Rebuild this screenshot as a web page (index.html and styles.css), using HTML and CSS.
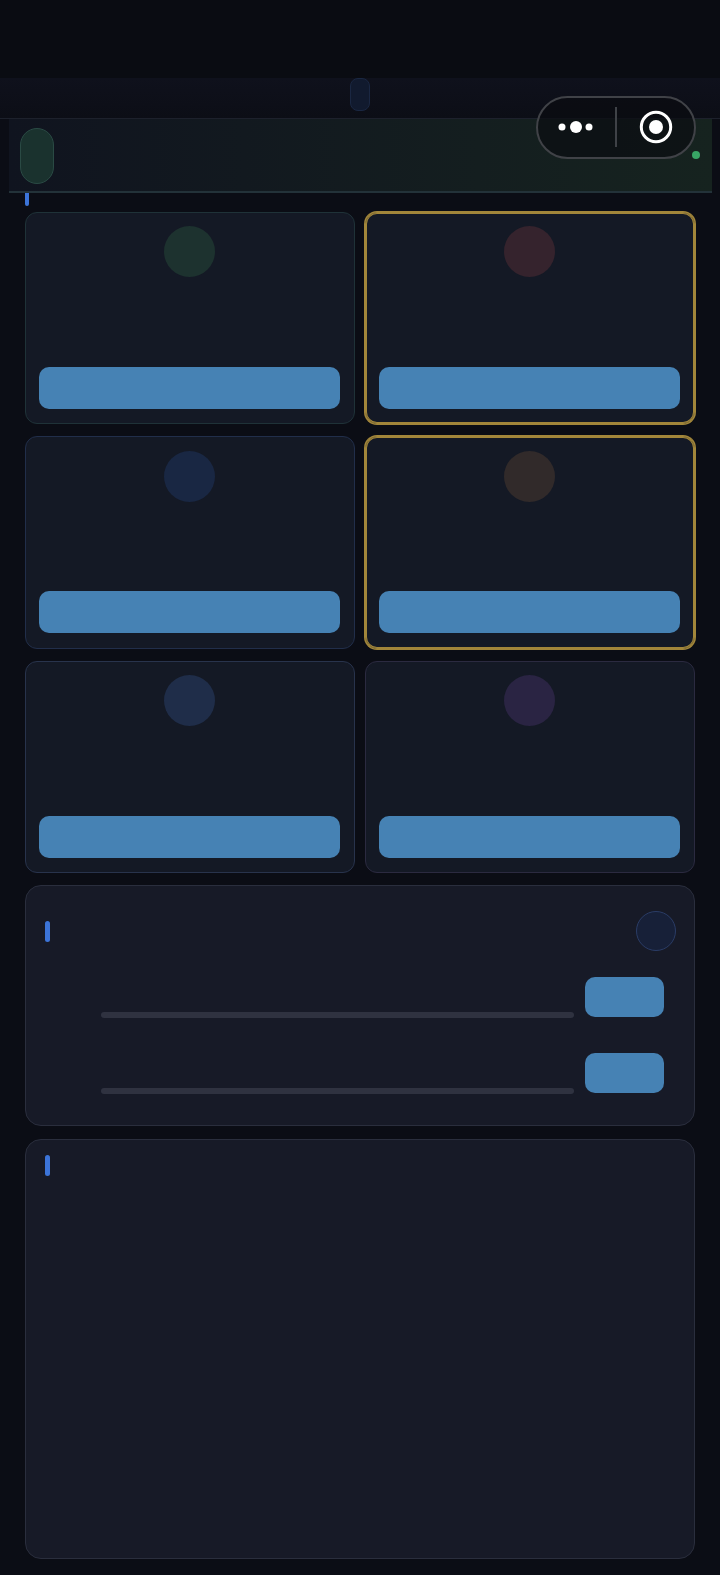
FILE: index.html
```html
<!DOCTYPE html>
<html lang="en">
<head>
<meta charset="utf-8">
<title>Dashboard</title>
<link rel="stylesheet" href="styles.css">
</head>
<body>
<div class="page">
  <div class="status-space"></div>
  <header class="topbar"><span class="top-pill"></span></header>
  <section class="banner">
    <span class="banner-pill"></span>
    <span class="online-dot"></span>
  </section>
  <main class="content">
    <span class="mark mark-section"></span>
    <div class="grid">
      <article class="card card-green"><span class="avatar avatar-green"></span><span class="btn btn-wide"></span></article>
      <article class="card card-gold"><span class="avatar avatar-red"></span><span class="btn btn-wide"></span></article>
      <article class="card card-blue"><span class="avatar avatar-blue"></span><span class="btn btn-wide"></span></article>
      <article class="card card-gold"><span class="avatar avatar-brown"></span><span class="btn btn-wide"></span></article>
      <article class="card card-slate"><span class="avatar avatar-slate"></span><span class="btn btn-wide"></span></article>
      <article class="card card-purple"><span class="avatar avatar-purple"></span><span class="btn btn-wide"></span></article>
    </div>
    <section class="panel panel-progress">
      <div class="panel-head">
        <span class="mark"></span>
        <span class="round-btn"></span>
      </div>
      <div class="rows">
        <div class="row"><span class="track"></span><span class="btn btn-small"></span></div>
        <div class="row"><span class="track"></span><span class="btn btn-small"></span></div>
      </div>
    </section>
    <section class="panel panel-empty">
      <span class="mark"></span>
    </section>
  </main>
  <div class="capsule">
    <svg class="capsule-dots" width="38" height="14" viewBox="0 0 38 14" aria-hidden="true">
      <circle cx="6" cy="7" r="3.5" fill="#fff"/>
      <circle cx="20" cy="7" r="6" fill="#fff"/>
      <circle cx="33" cy="7" r="3.5" fill="#fff"/>
    </svg>
    <span class="capsule-divider"></span>
    <svg class="capsule-ring" width="34" height="34" viewBox="0 0 34 34" aria-hidden="true">
      <circle cx="17" cy="17" r="14.7" fill="none" stroke="#fff" stroke-width="3"/>
      <circle cx="17" cy="17" r="7" fill="#fff"/>
    </svg>
  </div>
</div>
</body>
</html>
```

FILE: styles.css
```css
* { box-sizing: border-box; }
html, body { margin: 0; padding: 0; background: #0b0d15; }
.page {
  position: relative;
  width: 720px;
  height: 1575px;
  overflow: hidden;
  background: #0b0d15;
}
.status-space { height: 78px; background: #0a0c12; }
.topbar {
  height: 41px;
  display: flex;
  justify-content: center;
  background: linear-gradient(180deg, #0f111c, #0c0e16);
  border-bottom: 1px solid #1d212c;
}
.top-pill {
  width: 20px;
  height: 33px;
  border-radius: 8px;
  background: #111a2e;
  border: 1px solid #1a2742;
}
.banner {
  position: relative;
  height: 73.5px;
  margin: 0 8.5px;
  padding: 9px 11px;
  background: linear-gradient(90deg, #10141f, #16231f);
  border-bottom: 2px solid #233239;
}
.banner-pill {
  display: block;
  width: 34px;
  height: 56px;
  border-radius: 17px;
  background: #1a322e;
  border: 1px solid #2a4a44;
}
.online-dot {
  position: absolute;
  right: 11.5px;
  top: 32px;
  width: 8px;
  height: 8px;
  border-radius: 50%;
  background: #38a565;
}
.content { padding: 0 25px; }
.mark {
  display: block;
  width: 5px;
  height: 21px;
  border-radius: 3px;
  background: #3c74d8;
}
.mark-section { width: 4px; height: 13px; border-radius: 0 0 2px 2px; margin-bottom: 6.2px; }
.grid {
  display: grid;
  grid-template-columns: 330px 330.5px;
  grid-auto-rows: 212.5px;
  column-gap: 9.5px;
  row-gap: 12px;
}
.card {
  display: flex;
  flex-direction: column;
  align-items: center;
  padding: 13.5px 14px 14.5px 13px;
  border-radius: 12px;
  background: #141925;
  border: 1px solid #252c3a;
}
.card-green { border-color: #1f3238; }
.card-blue { border-color: #212e4a; }
.card-slate { border-color: #28334c; }
.card-purple { border-color: #2b2a40; }
.card-gold {
  border-color: #a2863a;
  box-shadow: 0 0 0 1px #a2863a, inset 0 0 0 1px #a2863a;
}
.avatar {
  display: block;
  width: 51px;
  height: 51px;
  border-radius: 50%;
}
.avatar-green { background: #1d322f; }
.avatar-red { background: #35232d; }
.avatar-blue { background: #192743; }
.avatar-brown { background: #312a2a; }
.avatar-slate { background: #1f2d49; }
.avatar-purple { background: #2a2443; }
.btn {
  display: block;
  background: #4682b4;
  border-radius: 10px;
}
.btn-wide { width: 100%; height: 42px; margin-top: auto; }
.btn-small { width: 79px; height: 40px; flex: none; align-self: flex-start; }
.panel {
  margin-top: 12px;
  border-radius: 16px;
  background: #171a27;
  border: 1px solid #2a2e3d;
}
.panel-progress { height: 241px; padding: 25px 18px 0 19px; }
.panel-empty { height: 420px; margin-top: 13px; padding: 15px 19px; }
.panel-head {
  display: flex;
  justify-content: space-between;
  align-items: center;
  height: 40px;
}
.round-btn {
  display: block;
  width: 40px;
  height: 40px;
  border-radius: 50%;
  background: #172038;
  border: 1px solid #2a3c66;
}
.rows {
  display: flex;
  flex-direction: column;
  gap: 35px;
  margin-top: 26px;
  margin-left: 56px;
  margin-right: 12px;
}
.row {
  display: flex;
  align-items: flex-end;
  gap: 11px;
  height: 41px;
}
.track {
  flex: 1;
  height: 6px;
  border-radius: 3px;
  background: #2f3240;
}
.capsule {
  position: absolute;
  left: 536px;
  top: 95.5px;
  width: 160px;
  height: 63px;
  display: flex;
  align-items: center;
  padding-left: 18px;
  border-radius: 32px;
  background: rgba(10, 12, 16, 0.68);
  border: 2px solid #404247;
}
.capsule-dots { display: block; flex: none; }
.capsule-divider {
  display: block;
  width: 2px;
  height: 40px;
  margin-left: 21px;
  background: #3f4247;
}
.capsule-ring { display: block; flex: none; margin-left: 22px; }
```
